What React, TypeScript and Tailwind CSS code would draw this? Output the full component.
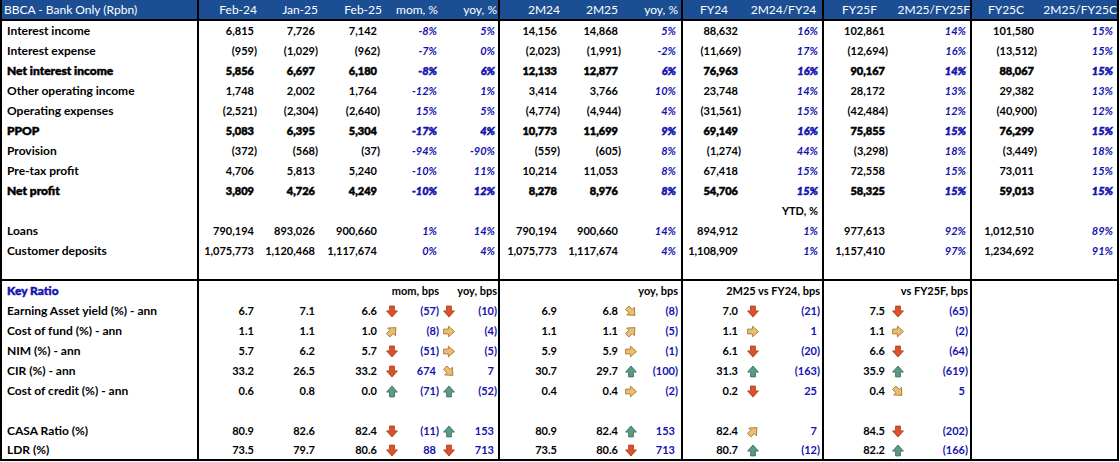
import React from "react";

const GRID =
  "grid grid-cols-[197px_61px_62px_62px_57px_59px_61px_62px_60px_62px_79px_66px_82px_68px_79px]";

const BR = new Set([0, 5, 8, 10, 12, 14]);
const PAD = [
  "pl-[5px]",
  "pr-[3px]",
  "pr-[4px]",
  "pr-[4px]",
  "pr-[2px]",
  "pr-[1px]",
  "pr-[1px]",
  "pr-[2px]",
  "pr-[3px]",
  "pr-[4px]",
  "pr-[2px]",
  "pr-[2px]",
  "pr-[2px]",
  "pr-[3px]",
  "pr-[2px]",
];
const PCT = new Set([4, 5, 8, 10, 12, 14]);

function Cell({
  i,
  className = "",
  children,
}: {
  i: number;
  className?: string;
  children?: React.ReactNode;
}) {
  return (
    <div
      className={
        "h-full flex items-center whitespace-nowrap min-w-0 " +
        (BR.has(i) ? "border-r-2 border-black " : "") +
        className
      }
    >
      {children}
    </div>
  );
}

function Num({ v }: { v: string }) {
  const neg = v.endsWith(")");
  return (
    <span>
      {v}
      {!neg && <span className="invisible">)</span>}
    </span>
  );
}

type Dir = "down" | "dr" | "right" | "ur" | "up";

function Arrow({ dir }: { dir: Dir }) {
  const rot = { down: 0, dr: -45, right: -90, ur: -135, up: 180 }[dir];
  const [fill, stroke] =
    dir === "down"
      ? ["#d8542c", "#b23d1b"]
      : dir === "up"
      ? ["#5b9a85", "#3d7561"]
      : ["#ebbd70", "#a47c37"];
  return (
    <svg width="12" height="13" viewBox="0 0 12 12" className="shrink-0">
      <g transform={`rotate(${rot} 6 6)`}>
        <path
          d="M3.6 0.6 H8.4 V5.4 H11.4 L6 11.5 L0.6 5.4 H3.6 Z"
          fill={fill}
          stroke={stroke}
          strokeWidth="0.9"
          strokeLinejoin="round"
        />
      </g>
    </svg>
  );
}

type TopRow = [string, boolean, string[]];

const top: TopRow[] = [
  ["Interest income", false, ["6,815", "7,726", "7,142", "-8%", "5%", "14,156", "14,868", "5%", "88,632", "16%", "102,861", "14%", "101,580", "15%"]],
  ["Interest expense", false, ["(959)", "(1,029)", "(962)", "-7%", "0%", "(2,023)", "(1,991)", "-2%", "(11,669)", "17%", "(12,694)", "16%", "(13,512)", "15%"]],
  ["Net interest income", true, ["5,856", "6,697", "6,180", "-8%", "6%", "12,133", "12,877", "6%", "76,963", "16%", "90,167", "14%", "88,067", "15%"]],
  ["Other operating income", false, ["1,748", "2,002", "1,764", "-12%", "1%", "3,414", "3,766", "10%", "23,748", "14%", "28,172", "13%", "29,382", "13%"]],
  ["Operating expenses", false, ["(2,521)", "(2,304)", "(2,640)", "15%", "5%", "(4,774)", "(4,944)", "4%", "(31,561)", "15%", "(42,484)", "12%", "(40,900)", "12%"]],
  ["PPOP", true, ["5,083", "6,395", "5,304", "-17%", "4%", "10,773", "11,699", "9%", "69,149", "16%", "75,855", "15%", "76,299", "15%"]],
  ["Provision", false, ["(372)", "(568)", "(37)", "-94%", "-90%", "(559)", "(605)", "8%", "(1,274)", "44%", "(3,298)", "18%", "(3,449)", "18%"]],
  ["Pre-tax profit", false, ["4,706", "5,813", "5,240", "-10%", "11%", "10,214", "11,053", "8%", "67,418", "15%", "72,558", "15%", "73,011", "15%"]],
  ["Net profit", true, ["3,809", "4,726", "4,249", "-10%", "12%", "8,278", "8,976", "8%", "54,706", "15%", "58,325", "15%", "59,013", "15%"]],
];

const bal: TopRow[] = [
  ["Loans", false, ["790,194", "893,026", "900,660", "1%", "14%", "790,194", "900,660", "14%", "894,912", "1%", "977,613", "92%", "1,012,510", "89%"]],
  ["Customer deposits", false, ["1,075,773", "1,120,468", "1,117,674", "0%", "4%", "1,075,773", "1,117,674", "4%", "1,108,909", "1%", "1,157,410", "97%", "1,234,692", "91%"]],
];

type KR = {
  label: string;
  v: [string, string, string];
  mom: [Dir, string];
  yoy: [Dir, string];
  m: [string, string];
  my: [Dir, string];
  fy: string;
  fyd: [Dir, string];
  ff: string;
  ffd: [Dir, string];
};

const kr1: KR[] = [
  { label: "Earning Asset yield (%) - ann", v: ["6.7", "7.1", "6.6"], mom: ["down", "(57)"], yoy: ["down", "(10)"], m: ["6.9", "6.8"], my: ["dr", "(8)"], fy: "7.0", fyd: ["down", "(21)"], ff: "7.5", ffd: ["down", "(65)"] },
  { label: "Cost of fund (%) - ann", v: ["1.1", "1.1", "1.0"], mom: ["ur", "(8)"], yoy: ["right", "(4)"], m: ["1.1", "1.1"], my: ["ur", "(5)"], fy: "1.1", fyd: ["right", "1"], ff: "1.1", ffd: ["right", "(2)"] },
  { label: "NIM (%) - ann", v: ["5.7", "6.2", "5.7"], mom: ["down", "(51)"], yoy: ["right", "(5)"], m: ["5.9", "5.9"], my: ["right", "(1)"], fy: "6.1", fyd: ["down", "(20)"], ff: "6.6", ffd: ["down", "(64)"] },
  { label: "CIR (%) - ann", v: ["33.2", "26.5", "33.2"], mom: ["down", "674"], yoy: ["dr", "7"], m: ["30.7", "29.7"], my: ["up", "(100)"], fy: "31.3", fyd: ["up", "(163)"], ff: "35.9", ffd: ["up", "(619)"] },
  { label: "Cost of credit (%) - ann", v: ["0.6", "0.8", "0.0"], mom: ["up", "(71)"], yoy: ["up", "(52)"], m: ["0.4", "0.4"], my: ["right", "(2)"], fy: "0.2", fyd: ["down", "25"], ff: "0.4", ffd: ["dr", "5"] },
];

const kr2: KR[] = [
  { label: "CASA Ratio (%)", v: ["80.9", "82.6", "82.4"], mom: ["down", "(11)"], yoy: ["up", "153"], m: ["80.9", "82.4"], my: ["up", "153"], fy: "82.4", fyd: ["ur", "7"], ff: "84.5", ffd: ["down", "(202)"] },
  { label: "LDR (%)", v: ["73.5", "79.7", "80.6"], mom: ["down", "88"], yoy: ["down", "713"], m: ["73.5", "80.6"], my: ["down", "713"], fy: "80.7", fyd: ["up", "(12)"], ff: "82.2", ffd: ["up", "(166)"] },
];

const BLUE = "text-[#1212b0]";

function DataRow({ r }: { r: TopRow }) {
  const [label, bold, vals] = r;
  const w = bold ? "font-black [-webkit-text-stroke-width:0.5px]" : "font-bold";
  return (
    <div className={GRID + " h-[20px] " + w}>
      <Cell i={0} className={PAD[0] + " text-[12px]"}>
        {label}
      </Cell>
      {vals.map((v, k) => {
        const i = k + 1;
        const pct = PCT.has(i);
        return (
          <Cell key={i} i={i} className={"justify-end " + PAD[i]}>
            {pct ? (
              <span className={"italic mr-[2px] " + BLUE}>{v}</span>
            ) : (
              <Num v={v} />
            )}
          </Cell>
        );
      })}
    </div>
  );
}

function Empty({ last = false, children }: { last?: boolean; children?: (i: number) => React.ReactNode }) {
  return (
    <div className={GRID + " h-[20px] font-bold " + (last ? "border-b-2 border-black" : "")}>
      {Array.from({ length: 15 }).map((_, i) => (
        <Cell key={i} i={i} className={(i === 0 ? "" : "justify-end ") + PAD[i]}>
          {children ? children(i) : null}
        </Cell>
      ))}
    </div>
  );
}

function Bps({ i, d }: { i: number; d: [Dir, string] }) {
  return (
    <Cell i={i} className={"justify-between pl-[2px] " + PAD[i]}>
      <Arrow dir={d[0]} />
      <span className={BLUE}>
        <Num v={d[1]} />
      </span>
    </Cell>
  );
}

function NumCell({ i, v }: { i: number; v: string }) {
  return (
    <Cell i={i} className={"justify-end " + PAD[i]}>
      <Num v={v} />
    </Cell>
  );
}

function KRRow({ r, last = false }: { r: KR; last?: boolean }) {
  return (
    <div className={GRID + " h-[20px] font-bold " + (last ? "border-b-2 border-black" : "")}>
      <Cell i={0} className={PAD[0] + " text-[12px]"}>
        {r.label}
      </Cell>
      <NumCell i={1} v={r.v[0]} />
      <NumCell i={2} v={r.v[1]} />
      <NumCell i={3} v={r.v[2]} />
      <Bps i={4} d={r.mom} />
      <Bps i={5} d={r.yoy} />
      <NumCell i={6} v={r.m[0]} />
      <NumCell i={7} v={r.m[1]} />
      <Bps i={8} d={r.my} />
      <NumCell i={9} v={r.fy} />
      <Bps i={10} d={r.fyd} />
      <NumCell i={11} v={r.ff} />
      <Bps i={12} d={r.ffd} />
      <Cell i={13} />
      <Cell i={14} />
    </div>
  );
}

const HEAD: [string, string][] = [
  ["BBCA - Bank Only (Rpbn)", "pl-[2px]"],
  ["Feb-24", "justify-end pr-[3px]"],
  ["Jan-25", "justify-end pr-[4px]"],
  ["Feb-25", "justify-end pr-[2px]"],
  ["mom, %", "justify-end pr-[3px]"],
  ["yoy, %", "justify-end pr-[1px]"],
  ["2M24", "justify-end pr-[1px]"],
  ["2M25", "justify-end pr-[5px]"],
  ["yoy, %", "justify-end pr-[3px]"],
  ["FY24", "justify-center"],
  ["2M24/FY24", "justify-center"],
  ["FY25F", "pl-[18px]"],
  ["2M25/FY25F", "justify-end pr-[0px]"],
  ["FY25C", "justify-center"],
  ["2M25/FY25C", "justify-end pr-[0px]"],
];

export default function App() {
  return (
    <div className="w-[1120px] h-[462px] bg-white overflow-hidden text-[11px] text-black font-['Lato',sans-serif]">
      <div className="w-[1119px] border-l-2 border-black">
        <div className={GRID + " h-[21px] bg-[#1c4e94] text-white text-[12px] font-normal border-b-2 border-black"}>
          {HEAD.map(([t, c], i) => (
            <Cell key={i} i={i} className={c}>
              {t}
            </Cell>
          ))}
        </div>
        {top.map((r, k) => (
          <DataRow key={k} r={r} />
        ))}
        <Empty>
          {(i) => (i === 10 ? <span className="mr-[2px]">YTD, %</span> : null)}
        </Empty>
        {bal.map((r, k) => (
          <DataRow key={k} r={r} />
        ))}
        <Empty last />
        <Empty>
          {(i) =>
            i === 0 ? (
              <span className={"font-black text-[12px] [-webkit-text-stroke-width:0.4px] " + BLUE}>Key Ratio</span>
            ) : i === 4 ? (
              <span>mom, bps</span>
            ) : i === 5 ? (
              <span>yoy, bps</span>
            ) : i === 8 ? (
              <span>yoy, bps</span>
            ) : i === 10 ? (
              <span>2M25 vs FY24, bps</span>
            ) : i === 12 ? (
              <span>vs FY25F, bps</span>
            ) : null
          }
        </Empty>
        {kr1.map((r, k) => (
          <KRRow key={k} r={r} />
        ))}
        <Empty />
        {kr2.map((r, k) => (
          <KRRow key={k} r={r} last={k === kr2.length - 1} />
        ))}
      </div>
    </div>
  );
}
